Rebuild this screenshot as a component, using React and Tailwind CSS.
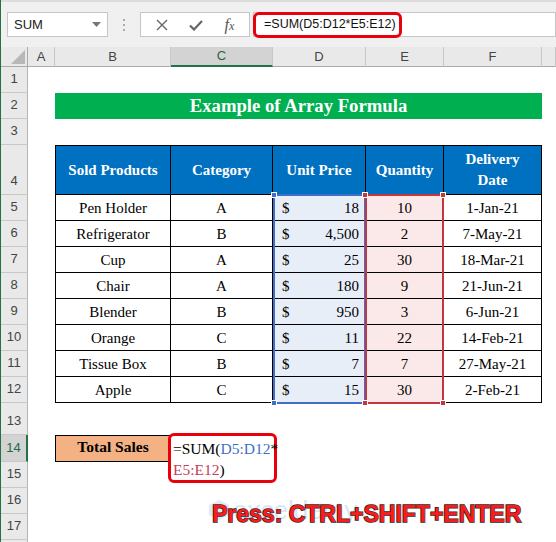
import React from 'react';

const rows = [
    ['Pen Holder', 'A', '18', '10', '1-Jan-21'],
    ['Refrigerator', 'B', '4,500', '2', '7-May-21'],
    ['Cup', 'A', '25', '30', '18-Mar-21'],
    ['Chair', 'A', '180', '9', '21-Jun-21'],
    ['Blender', 'B', '950', '3', '6-Jun-21'],
    ['Orange', 'C', '11', '22', '14-Feb-21'],
    ['Tissue Box', 'B', '7', '7', '27-May-21'],
    ['Apple', 'C', '15', '30', '2-Feb-21'],
];

const serif = "font-['Liberation_Serif','Times_New_Roman',serif]";
const sans = "font-['Liberation_Sans',Arial,sans-serif]";

function RowHead({ n, active }) {
    return (
        <div
            className={`flex items-end justify-center pb-1 border-b border-[#c8c8c8] text-[13px] ${sans} ${
                active ? 'bg-[#d3d3d3] text-[#1e6b3e] border-r-2 border-r-[#217346]' : 'bg-[#e9e9e9] text-[#444] border-r border-r-[#b5b5b5]'
            }`}
        >
            {n}
        </div>
    );
}

function Empty({ span }) {
    return <div className={span ? 'col-span-7' : ''} />;
}

function ColHead({ label, active }) {
    return (
        <div
            className={`flex items-center justify-center text-[13px] ${sans} border-r border-[#c8c8c8] ${
                active ? 'bg-[#d3d3d3] text-[#1e6b3e] border-b-2 border-b-[#217346]' : 'bg-[#e9e9e9] text-[#444] border-b border-b-[#ababab]'
            }`}
        >
            {label}
        </div>
    );
}

function Handle({ className }) {
    return <div className={`absolute w-[6px] h-[6px] border border-white ${className}`} />;
}

export default function App() {
    return (
        <div className="w-[556px] h-[542px] overflow-hidden bg-white relative border-l border-[#217346]">
            {/* formula bar */}
            <div className="h-[47px] bg-[#f0f0f0] border-t-2 border-[#dcdcdc] flex items-center">
                <div className={`ml-[6px] w-[101px] h-[25px] bg-white border border-[#c6c6c6] flex items-center justify-between pl-[6px] pr-[6px] text-[13px] text-[#222] ${sans}`}>
                    <span>SUM</span>
                    <svg width="9" height="5" viewBox="0 0 9 5"><path d="M0 0 L9 0 L4.5 5 Z" fill="#777" /></svg>
                </div>
                <div className="w-[32px] flex flex-col items-center gap-[3px]">
                    <span className="w-[2px] h-[2px] bg-[#aaa]" />
                    <span className="w-[2px] h-[2px] bg-[#aaa]" />
                    <span className="w-[2px] h-[2px] bg-[#aaa]" />
                </div>
                <div className="w-[110px] h-[25px] bg-white border border-[#c6c6c6] flex items-center justify-around px-1">
                    <svg width="12" height="12" viewBox="0 0 12 12"><path d="M1 1 L11 11 M11 1 L1 11" stroke="#666" strokeWidth="1.4" /></svg>
                    <svg width="14" height="12" viewBox="0 0 14 12"><path d="M1 6.5 L5 10.5 L13 2" stroke="#666" strokeWidth="2.2" fill="none" /></svg>
                    <span className={`${serif} italic text-[16px] text-[#555] leading-none`}>f<span className="text-[12px]">x</span></span>
                </div>
                <div className="ml-[3px] flex-1 h-[25px] bg-white border border-[#c6c6c6] flex items-center">
                    <div className={`h-[26px] w-[149px] -ml-[1px] border-[3px] border-[#e8000b] rounded-[6px] flex items-center pl-[8px] text-[12.5px] text-[#111] ${sans}`}>
                        =SUM(D5:D12*E5:E12)
                    </div>
                </div>
            </div>

            {/* sheet */}
            <div className="relative">
                <div className="grid grid-cols-[27px_27px_116px_102px_93px_78px_98px_1fr] grid-rows-[20px_26px_26px_26px_50px_repeat(8,26px)_32px_27px_26px_26px_26px_1fr] h-[495px]">
                    {/* column header row */}
                    <div className="bg-[#e9e9e9] border-r border-b border-[#ababab] relative">
                        <svg className="absolute right-[2px] bottom-[2px]" width="14" height="14" viewBox="0 0 14 14"><path d="M14 0 L14 14 L0 14 Z" fill="#b8b8b8" /></svg>
                    </div>
                    <ColHead label="A" />
                    <ColHead label="B" />
                    <ColHead label="C" active />
                    <ColHead label="D" />
                    <ColHead label="E" />
                    <ColHead label="F" />
                    <ColHead label="" />

                    {/* row 1 */}
                    <RowHead n="1" />
                    <Empty span />

                    {/* row 2 */}
                    <RowHead n="2" />
                    <div />
                    <div className={`col-span-5 bg-[#00b050] text-white font-bold text-[18.7px] ${serif} flex items-center justify-center`}>
                        Example of Array Formula
                    </div>
                    <div />

                    {/* row 3 */}
                    <RowHead n="3" />
                    <Empty span />

                    {/* row 4 header */}
                    <RowHead n="4" />
                    <div />
                    {['Sold Products', 'Category', 'Unit Price', 'Quantity', 'Delivery Date'].map((h, i) => (
                        <div
                            key={h}
                            className={`bg-[#0070c0] text-white font-bold text-[15px] leading-[21px] ${serif} flex items-center justify-center text-center border-t border-b border-r border-black ${i === 0 ? 'border-l' : ''} ${h === 'Delivery Date' ? 'px-[18px]' : ''}`}
                        >
                            {h}
                        </div>
                    ))}
                    <div />

                    {/* data rows */}
                    {rows.map((r, idx) => (
                        <React.Fragment key={r[0]}>
                            <RowHead n={String(idx + 5)} />
                            <div />
                            <div className={`flex items-center justify-center pt-[2px] border-l border-r border-b border-black text-[15px] text-black ${serif}`}>{r[0]}</div>
                            <div className={`flex items-center justify-center pt-[2px] border-r border-b border-black text-[15px] text-black ${serif}`}>{r[1]}</div>
                            <div className={`flex items-center justify-between pt-[2px] pl-[9px] pr-[6px] bg-[#e8eef8] border-r border-b border-black text-[15px] text-black ${serif}`}>
                                <span>$</span>
                                <span>{r[2]}</span>
                            </div>
                            <div className={`flex items-center justify-center pt-[2px] bg-[#fbe9e9] border-r border-b border-black text-[15px] text-black ${serif}`}>{r[3]}</div>
                            <div className={`flex items-center justify-center pt-[2px] border-r border-b border-black text-[15px] text-black ${serif}`}>{r[4]}</div>
                            <div />
                        </React.Fragment>
                    ))}

                    {/* row 13 */}
                    <RowHead n="13" />
                    <Empty span />

                    {/* row 14 */}
                    <RowHead n="14" active />
                    <div />
                    <div className={`flex items-center justify-center pb-[3px] bg-[#f4b183] border border-black font-bold text-[15.5px] text-black ${serif}`}>
                        Total Sales
                    </div>
                    <div />
                    <div />
                    <div />
                    <div />
                    <div />

                    {[15, 16, 17].map((n) => (
                        <React.Fragment key={n}>
                            <RowHead n={String(n)} />
                            <Empty span />
                        </React.Fragment>
                    ))}
                    <div className="bg-[#e9e9e9] border-r border-[#b5b5b5]" />
                    <Empty span />
                </div>

                {/* range selections */}
                <div className="absolute left-[272px] top-[147px] w-[93px] h-[210px] border-2 border-[#3f6fc6]" />
                <div className="absolute left-[364px] top-[147px] w-[79px] h-[210px] border-2 border-[#c4373f]" />
                <Handle className="left-[270px] top-[145px] bg-[#3f6fc6]" />
                <Handle className="left-[270px] top-[353px] bg-[#3f6fc6]" />
                <Handle className="left-[361px] top-[145px] bg-[#c4373f]" />
                <Handle className="left-[439px] top-[145px] bg-[#c4373f]" />
                <Handle className="left-[361px] top-[353px] bg-[#c4373f]" />
                <Handle className="left-[439px] top-[353px] bg-[#c4373f]" />

                {/* in-cell formula editor */}
                <div className={`absolute left-[167px] top-[386px] w-[109px] h-[50px] bg-white border-[3px] border-[#e8000b] rounded-[6px] pl-[2px] pt-[2px] text-[15.5px] leading-[21px] text-black ${serif}`}>
                    <div>=SUM(<span className="text-[#3f6fc6]">D5:D12</span>*</div>
                    <div><span className="text-[#c0405a]">E5:E12</span>)</div>
                </div>

                {/* watermark */}
                <div className={`absolute left-[207px] top-[450px] flex items-center gap-[3px] opacity-40 ${sans}`}>
                    <svg width="22" height="22" viewBox="0 0 22 22"><path d="M11 1 L21 6 L21 16 L11 21 L1 16 L1 6 Z" fill="#b9c8e6" /></svg>
                    <span className="text-[26px] text-[#a7bde6] leading-none">exceldemy</span>
                </div>

                {/* hint */}
                <div
                    className={`absolute left-[211px] top-[456px] text-[23px] leading-[23px] font-bold text-[#ff1a1a] whitespace-nowrap ${sans}`}
                    style={{ WebkitTextStroke: '1.5px #2a2a2a', paintOrder: 'stroke fill' }}
                >
                    Press: CTRL+SHIFT+ENTER
                </div>
            </div>
        </div>
    );
}
